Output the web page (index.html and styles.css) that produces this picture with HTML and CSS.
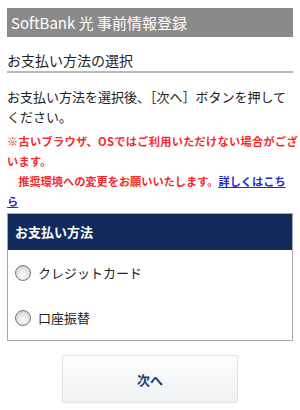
FILE: index.html
```html
<!DOCTYPE html>
<html lang="ja">
<head>
<meta charset="utf-8">
<link rel="stylesheet" href="styles.css">
</head>
<body>
<div class="page">
  <div class="topbar">SoftBank 光 事前情報登録</div>
  <h2 class="title">お支払い方法の選択</h2>
  <p class="lead">お支払い方法を選択後、［次へ］ボタンを押してください。</p>
  <p class="warn"><span class="warn-first">※古いブラウザ、OSではご利用いただけない場合がござ<br>います。</span><br>　推奨環境への変更をお願いいたします。<a href="#" class="more">詳しくはこちら</a></p>
  <div class="box">
    <div class="box-head">お支払い方法</div>
    <label class="opt"><span class="radio"></span>クレジットカード</label>
    <label class="opt"><span class="radio"></span>口座振替</label>
  </div>
  <div class="actions">
    <button class="next">次へ</button>
  </div>
</div>
</body>
</html>
```
FILE: styles.css
```css
html, body {
  margin: 0;
  padding: 0;
  background: #fff;
}
body {
  font-family: "Noto Sans CJK JP", "Noto Sans", sans-serif;
  color: #222;
}
.page {
  padding: 8px 7px 0 7px;
}
.topbar {
  background: #8a8a8a;
  color: #fff;
  font-size: 15px;
  height: 29px;
  line-height: 29px;
  padding-left: 4px;
}
.title {
  margin: 12px 0 0 0;
  font-size: 14px;
  font-weight: normal;
  line-height: 22px;
  padding-bottom: 0;
  border-bottom: 2px solid #b8b8b8;
}
.lead {
  margin: 14px 0 0 0;
  font-size: 13px;
  line-height: 20px;
  color: #222;
}
.warn {
  margin: 4px 0 0 0;
  font-size: 11.2px;
  line-height: 20px;
  font-weight: bold;
  color: #f52a2a;
}
.warn-first {
  white-space: nowrap;
  letter-spacing: 0.3px;
}
.more {
  color: #2a2ad0;
  text-decoration: underline;
}
.box {
  margin-top: 2px;
  border: 1px solid #a8a8a8;
}
.box-head {
  background: #112c5c;
  color: #fff;
  font-size: 13px;
  font-weight: bold;
  height: 36px;
  line-height: 36px;
  padding-left: 7px;
}
.opt {
  display: flex;
  align-items: center;
  height: 45px;
  padding-left: 7px;
  font-size: 13px;
  color: #222;
}
.radio {
  width: 14px;
  height: 14px;
  border-radius: 50%;
  border: 1px solid #777;
  background: radial-gradient(circle at 50% 65%, #fafafa 0%, #e2e2e2 55%, #bdbdbd 100%);
  margin-right: 7px;
  flex: none;
}
.actions {
  display: flex;
  justify-content: center;
  padding-top: 14px;
}
.next {
  width: 176px;
  height: 48px;
  border: 1px solid #e2e2e2;
  border-radius: 2px;
  background: linear-gradient(#fdfdfd, #eef0f2);
  color: #1b3f78;
  font-family: "Noto Sans CJK JP", sans-serif;
  font-size: 13px;
  font-weight: bold;
}
```
